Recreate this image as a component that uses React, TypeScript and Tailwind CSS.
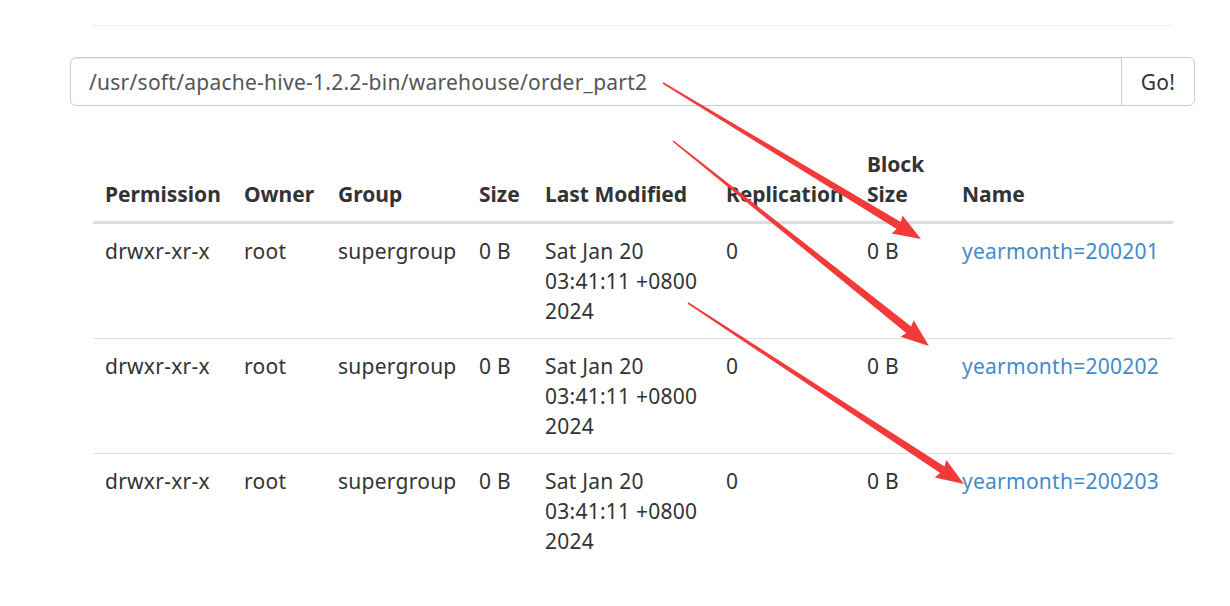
const rows = [
  { name: "yearmonth=200201" },
  { name: "yearmonth=200202" },
  { name: "yearmonth=200203" },
];

const arrows: [number, number, number, number][] = [
  [663, 83, 921, 239],
  [673, 141, 929, 346],
  [688, 303, 964, 484],
];

function arrowPoints(x0: number, y0: number, x1: number, y1: number) {
  const dx = x1 - x0;
  const dy = y1 - y0;
  const len = Math.hypot(dx, dy);
  const ux = dx / len;
  const uy = dy / len;
  const nx = -uy;
  const ny = ux;
  const head = 26;
  const bx = x1 - ux * head;
  const by = y1 - uy * head;
  const p = (x: number, y: number) => `${x.toFixed(1)},${y.toFixed(1)}`;
  return [
    p(x0 + nx * 0.8, y0 + ny * 0.8),
    p(bx + nx * 4, by + ny * 4),
    p(bx - ux * 2 + nx * 10.5, by - uy * 2 + ny * 10.5),
    p(x1, y1),
    p(bx - ux * 2 - nx * 10.5, by - uy * 2 - ny * 10.5),
    p(bx - nx * 4, by - ny * 4),
    p(x0 - nx * 0.8, y0 - ny * 0.8),
  ].join(" ");
}

export default function App() {
  return (
    <div className="relative min-h-[606px] w-[1230px] bg-white text-[21px] leading-[30px] tracking-[0.25px] text-[#333] font-['Noto_Sans','Microsoft_YaHei',sans-serif]">
      <div className="ml-[93px] w-[1080px] pt-[25px]">
        <div className="border-t border-[#eee]" />
      </div>

      <div className="ml-[70px] mt-[31px] flex h-[49px] w-[1125px]">
        <div className="flex flex-1 items-center rounded-l-[6px] border border-[#ccc] pl-[18px] text-[#555] shadow-[inset_0_1px_1px_rgba(0,0,0,0.075)]">
          /usr/soft/apache-hive-1.2.2-bin/warehouse/order_part2
        </div>
        <button className="-ml-px flex w-[74px] items-center justify-center rounded-r-[6px] border border-[#ccc] bg-white text-[#333]">
          Go!
        </button>
      </div>

      <table className="ml-[93px] mt-[31px] w-[1080px] table-fixed border-collapse text-left">
        <colgroup>
          <col className="w-[139px]" />
          <col className="w-[94px]" />
          <col className="w-[141px]" />
          <col className="w-[66px]" />
          <col className="w-[181px]" />
          <col className="w-[141px]" />
          <col className="w-[95px]" />
          <col className="w-[223px]" />
        </colgroup>
        <thead>
          <tr className="border-b-[3px] border-[#ddd] align-bottom font-bold tracking-normal">
            <th className="whitespace-nowrap p-[12px]">Permission</th>
            <th className="whitespace-nowrap p-[12px]">Owner</th>
            <th className="whitespace-nowrap p-[12px]">Group</th>
            <th className="whitespace-nowrap p-[12px]">Size</th>
            <th className="whitespace-nowrap p-[12px]">Last Modified</th>
            <th className="whitespace-nowrap p-[12px]">Replication</th>
            <th className="whitespace-nowrap p-[12px]">
              Block
              <br />
              Size
            </th>
            <th className="whitespace-nowrap p-[12px]">Name</th>
          </tr>
        </thead>
        <tbody>
          {rows.map((r, i) => (
            <tr key={r.name} className={i < rows.length - 1 ? "border-b border-[#ddd] align-top" : "align-top"}>
              <td className="whitespace-nowrap p-[12px]">drwxr-xr-x</td>
              <td className="whitespace-nowrap p-[12px]">root</td>
              <td className="whitespace-nowrap p-[12px]">supergroup</td>
              <td className="whitespace-nowrap p-[12px]">0 B</td>
              <td className="whitespace-nowrap p-[12px]">
                Sat Jan 20
                <br />
                03:41:11 +0800
                <br />
                2024
              </td>
              <td className="whitespace-nowrap p-[12px]">0</td>
              <td className="whitespace-nowrap p-[12px]">0 B</td>
              <td className="whitespace-nowrap p-[12px]">
                <a href="#" className="text-[#428bca]">
                  {r.name}
                </a>
              </td>
            </tr>
          ))}
        </tbody>
      </table>

      {/* annotation arrows drawn over the screenshot */}
      <svg className="pointer-events-none absolute left-0 top-0" width="1230" height="606">
        {arrows.map(([x0, y0, x1, y1], i) => (
          <polygon key={i} points={arrowPoints(x0, y0, x1, y1)} fill="#f33a3a" />
        ))}
      </svg>
    </div>
  );
}
